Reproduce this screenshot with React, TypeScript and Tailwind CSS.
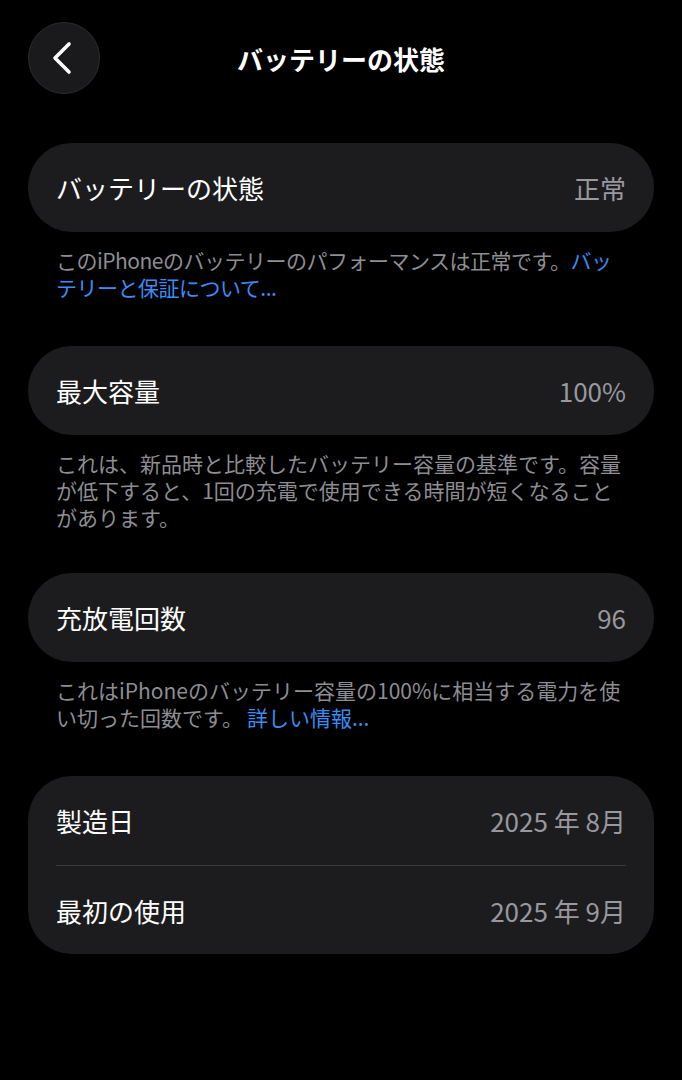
const font = { fontFamily: '"Noto Sans CJK JP", "Noto Sans", sans-serif' }

type Row = { label: string; value: string }

function Card({ rows }: { rows: Row[] }) {
  return (
    <div className="bg-[#1c1c1e] rounded-[44px] px-[28px]">
      {rows.map((row, i) => (
        <div
          key={row.label}
          className={`flex h-[89px] items-center justify-between ${i > 0 ? 'border-t border-[#3a3a3c]' : ''}`}
        >
          <span className="text-[26px] text-white">{row.label}</span>
          <span className="text-[26px] text-[#98989e]">{row.value}</span>
        </div>
      ))}
    </div>
  )
}

function Footer({ children, tight }: { children: React.ReactNode; tight?: boolean }) {
  return (
    <p
      className={`px-[28px] pt-[15px] text-[21px] leading-[27px] text-[#8d8d93] ${tight ? 'tracking-[-0.5px]' : ''}`}
    >
      {children}
    </p>
  )
}

export default function App() {
  return (
    <div className="min-h-[1080px] bg-black px-[28px] pt-[22px]" style={font}>
      {/* header */}
      <div className="relative flex h-[72px] items-center justify-center">
        <button className="absolute left-0 top-0 flex h-[72px] w-[72px] items-center justify-center rounded-full border border-[#2c2c2e] bg-[#1a1a1c]">
          <svg width="20" height="34" viewBox="0 0 20 34" fill="none" className="-ml-[4px]">
            <polyline
              points="17,3 3,17 17,31"
              stroke="white"
              strokeWidth="3.6"
              strokeLinecap="round"
              strokeLinejoin="round"
            />
          </svg>
        </button>
        <h1 className="text-[26px] font-bold text-white">バッテリーの状態</h1>
      </div>

      <div className="mt-[49px]">
        <Card rows={[{ label: 'バッテリーの状態', value: '正常' }]} />
        <Footer tight>
          このiPhoneのバッテリーのパフォーマンスは正常です。
          <span className="text-[#3b8cf5]">
            <span className="whitespace-nowrap">バッ</span>
            <br />
            テリーと保証について...
          </span>
        </Footer>
      </div>

      <div className="mt-[45px]">
        <Card rows={[{ label: '最大容量', value: '100%' }]} />
        <Footer>
          これは、新品時と比較したバッテリー容量の基準です。容量が低下すると、1回の充電で使用できる時間が短くなることがあります。
        </Footer>
      </div>

      <div className="mt-[42px]">
        <Card rows={[{ label: '充放電回数', value: '96' }]} />
        <Footer>
          これはiPhoneのバッテリー容量の100%に相当する電力を使い切った回数です。
          <span className="ml-[4px] text-[#3b8cf5]">詳しい情報...</span>
        </Footer>
      </div>

      <div className="mt-[45px]">
        <Card
          rows={[
            { label: '製造日', value: '2025 年 8月' },
            { label: '最初の使用', value: '2025 年 9月' },
          ]}
        />
      </div>
    </div>
  )
}
